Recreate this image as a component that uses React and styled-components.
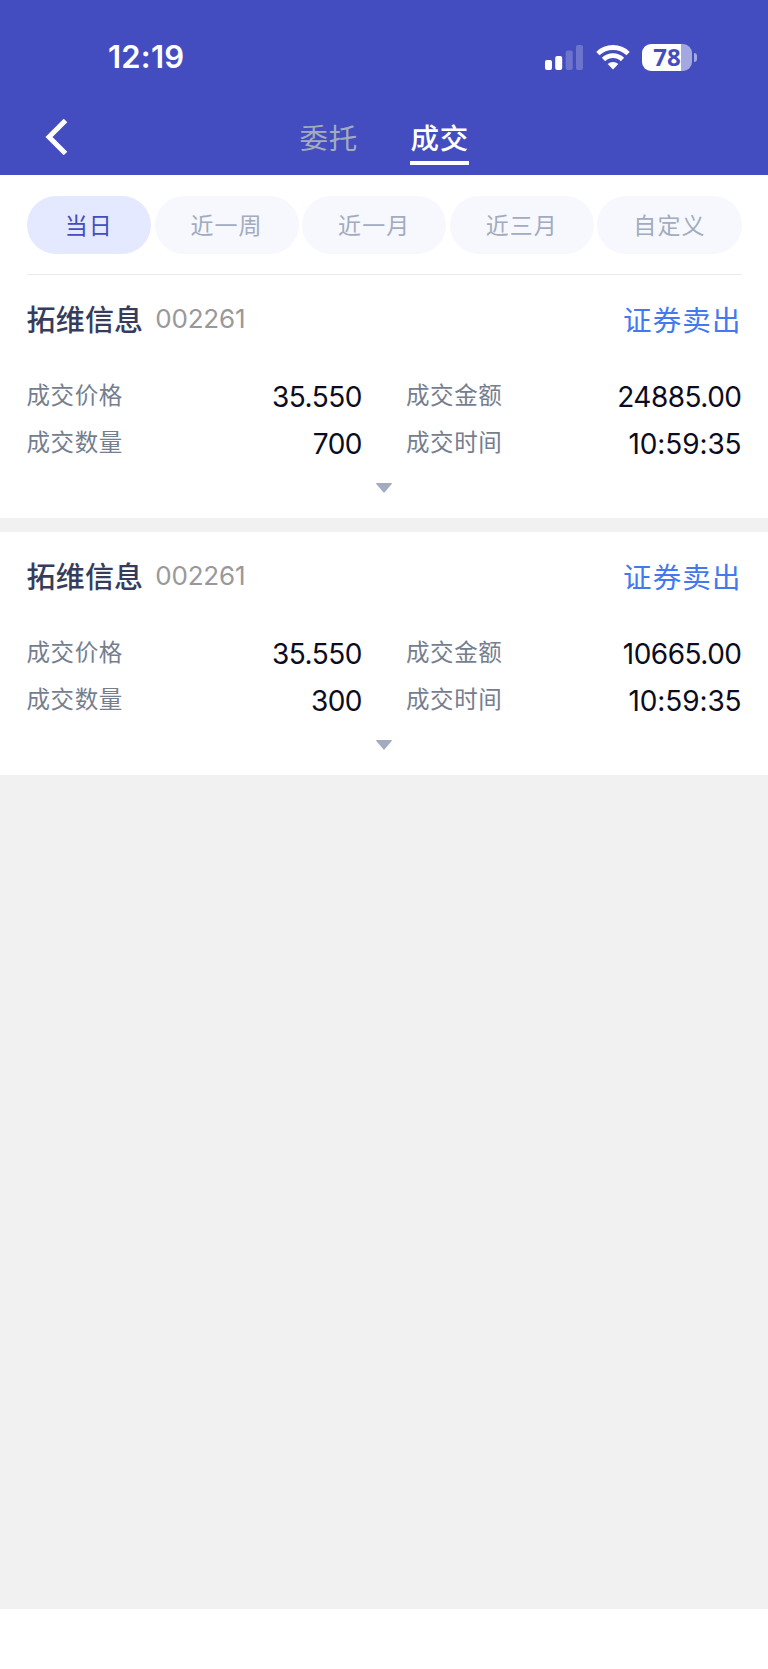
import React from "react";
import styled, { createGlobalStyle } from "styled-components";

const GlobalStyle = createGlobalStyle`
  * { box-sizing: border-box; }
  body {
    margin: 0;
    background: #fff;
    font-family: Inter, "Noto Sans CJK SC", sans-serif;
    -webkit-font-smoothing: antialiased;
  }
`;

const Screen = styled.div`
  width: 768px;
  height: 1669px;
  display: flex;
  flex-direction: column;
  background: #f1f1f1;
`;

const Header = styled.header`
  height: 175px;
  flex: none;
  display: flex;
  flex-direction: column;
  background: #444dbf;
  color: #fff;
`;

const StatusBar = styled.div`
  height: 100px;
  padding: 14px 71px 0 108px;
  display: flex;
  align-items: center;
  justify-content: space-between;
`;

const Clock = styled.span`
  font-size: 31px;
  line-height: 38px;
  font-weight: 600;
  letter-spacing: 0.2px;
`;

const StatusIcons = styled.div`
  display: flex;
  align-items: center;
  height: 30px;
`;

const SignalIcon = styled.svg`
  width: 38px;
  height: 27px;
  margin-right: 13px;
`;

const WifiIcon = styled.svg`
  width: 34px;
  height: 27px;
  margin-right: 12px;
`;

const Battery = styled.div`
  width: 50px;
  height: 27px;
  padding-left: 0;
  border-radius: 9px;
  background: linear-gradient(90deg, #fff 39px, #a4a8e0 39px);
  color: #444dbf;
  font: 700 24px/25px "Open Sans", sans-serif;
  text-align: center;
`;

const BatteryCap = styled.div`
  width: 3px;
  height: 9px;
  margin-left: 2px;
  border-radius: 0 4px 4px 0;
  background: #a4a8e0;
`;

const NavBar = styled.nav`
  height: 75px;
  padding: 0 45px;
  display: grid;
  grid-template-columns: 60px 1fr 60px;
`;

const BackIcon = styled.svg`
  width: 24px;
  height: 36px;
  margin-top: 19px;
`;

const Tabs = styled.div`
  display: flex;
  justify-content: center;
  gap: 52px;
`;

const Tab = styled.span`
  height: 65px;
  width: 59px;
  padding: 19px 0 0 0.5px;
  font-size: 28.5px;
  line-height: 40px;
  font-weight: ${(p) => (p.$active ? 500 : 400)};
  letter-spacing: 0.7px;
  white-space: nowrap;
  color: ${(p) => (p.$active ? "#fff" : "#a3acbc")};
  border-bottom: 4px solid ${(p) => (p.$active ? "#fff" : "transparent")};
`;

const FilterBar = styled.div`
  height: 100px;
  flex: none;
  margin: 0 26.5px;
  padding-top: 21px;
  display: flex;
  gap: 3.5px;
  border-bottom: 1px solid #e9eaec;
`;

const Pill = styled.span`
  flex: ${(p) => (p.$active ? "0 0 124.5px" : "1 1 0")};
  height: 58px;
  border-radius: 29px;
  text-align: center;
  font-size: 23px;
  line-height: 60px;
  letter-spacing: 1.1px;
  color: ${(p) => (p.$active ? "#444dbf" : "#a2abc0")};
  background: ${(p) => (p.$active ? "#e5e9ff" : "#f6f8fd")};
`;

const FilterPanel = styled.div`
  background: #fff;
  flex: none;
`;

const Card = styled.article`
  height: 243px;
  flex: none;
  margin-bottom: 14px;
  padding: 22px 26.5px 0;
  background: #fff;
`;

const CardHead = styled.div`
  height: 42px;
  display: flex;
  align-items: center;
`;

const StockName = styled.span`
  font-size: 29px;
  font-weight: 500;
  letter-spacing: 0.2px;
  color: #363d5c;
`;

const StockCode = styled.span`
  margin-left: 12px;
  font-size: 26px;
  letter-spacing: -0.2px;
  color: #999;
`;

const Side = styled.span`
  margin-left: auto;
  font-size: 28.5px;
  letter-spacing: 1.1px;
  color: #4478ee;
`;

const Fields = styled.div`
  margin-top: 33px;
  display: grid;
  grid-template-columns: 335.5px 335.5px;
  grid-auto-rows: 46.5px;
  column-gap: 44px;
`;

const Field = styled.div`
  display: flex;
  justify-content: space-between;
  align-items: center;
`;

const Label = styled.span`
  padding-top: 2px;
  font-size: 23.5px;
  line-height: 40px;
  letter-spacing: 0.6px;
  color: #757e8f;
`;

const Value = styled.span`
  padding-top: 4px;
  font-size: 28px;
  line-height: 40px;
  letter-spacing: ${(p) => (p.$time ? "-0.1px" : "-0.5px")};
  color: #0c0c20;
`;

const ExpandIcon = styled.svg`
  display: block;
  width: 16px;
  height: 10px;
  margin: 18px auto 0;
`;

const HomeArea = styled.footer`
  height: 60px;
  margin-top: auto;
  background: #fff;
`;

const ranges = ["当日", "近一周", "近一月", "近三月", "自定义"];

const trades = [
  { name: "拓维信息", code: "002261", side: "证券卖出", price: "35.550", amount: "24885.00", count: "700", time: "10:59:35" },
  { name: "拓维信息", code: "002261", side: "证券卖出", price: "35.550", amount: "10665.00", count: "300", time: "10:59:35" },
];

function Trade({ trade }) {
  const fields = [
    ["成交价格", trade.price],
    ["成交金额", trade.amount],
    ["成交数量", trade.count],
    ["成交时间", trade.time],
  ];
  return (
    <Card>
      <CardHead>
        <StockName>{trade.name}</StockName>
        <StockCode>{trade.code}</StockCode>
        <Side>{trade.side}</Side>
      </CardHead>
      <Fields>
        {fields.map(([label, value]) => (
          <Field key={label}>
            <Label>{label}</Label>
            <Value $time={value === trade.time}>{value}</Value>
          </Field>
        ))}
      </Fields>
      <ExpandIcon viewBox="0 0 16 10">
        <path d="M0.6 0H15.4Q16.3 0.2 15.7 1L8.7 9.3Q8 10.1 7.3 9.3L0.3 1Q-0.3 0.2 0.6 0Z" fill="#a2abc0" />
      </ExpandIcon>
    </Card>
  );
}

export default function App() {
  return (
    <Screen lang="zh-CN">
      <GlobalStyle />
      <Header>
        <StatusBar>
          <Clock>12:19</Clock>
          <StatusIcons>
            <SignalIcon viewBox="0 0 38 27" fill="#fff">
              <rect x="0" y="16" width="7" height="10" rx="2" />
              <rect x="10.2" y="12" width="7" height="14" rx="2" />
              <rect x="20.7" y="6.5" width="7" height="19.5" rx="2" opacity="0.22" />
              <rect x="31" y="1" width="7" height="25" rx="2" opacity="0.22" />
            </SignalIcon>
            <WifiIcon viewBox="0 0 34 27" fill="none" stroke="#fff" strokeWidth="4.8">
              <path d="M1.9 9.6A21.7 21.7 0 0 1 32.1 9.6" />
              <path d="M7.5 15.4A13.7 13.7 0 0 1 26.5 15.4" />
              <path d="M17 25.4L11.7 20.1A7.5 7.5 0 0 1 22.3 20.1Z" fill="#fff" stroke="none" />
            </WifiIcon>
            <Battery>78</Battery>
            <BatteryCap />
          </StatusIcons>
        </StatusBar>
        <NavBar>
          <BackIcon viewBox="0 0 24 36" fill="none" stroke="#fff" strokeWidth="5">
            <path d="M20.5 1.5L4 18L20.5 34.5" />
          </BackIcon>
          <Tabs>
            <Tab>委托</Tab>
            <Tab $active>成交</Tab>
          </Tabs>
        </NavBar>
      </Header>
      <FilterPanel>
        <FilterBar>
          {ranges.map((r, i) => (
            <Pill key={r} $active={i === 0}>{r}</Pill>
          ))}
        </FilterBar>
      </FilterPanel>
      {trades.map((t, i) => (
        <Trade key={i} trade={t} />
      ))}
      <HomeArea />
    </Screen>
  );
}
